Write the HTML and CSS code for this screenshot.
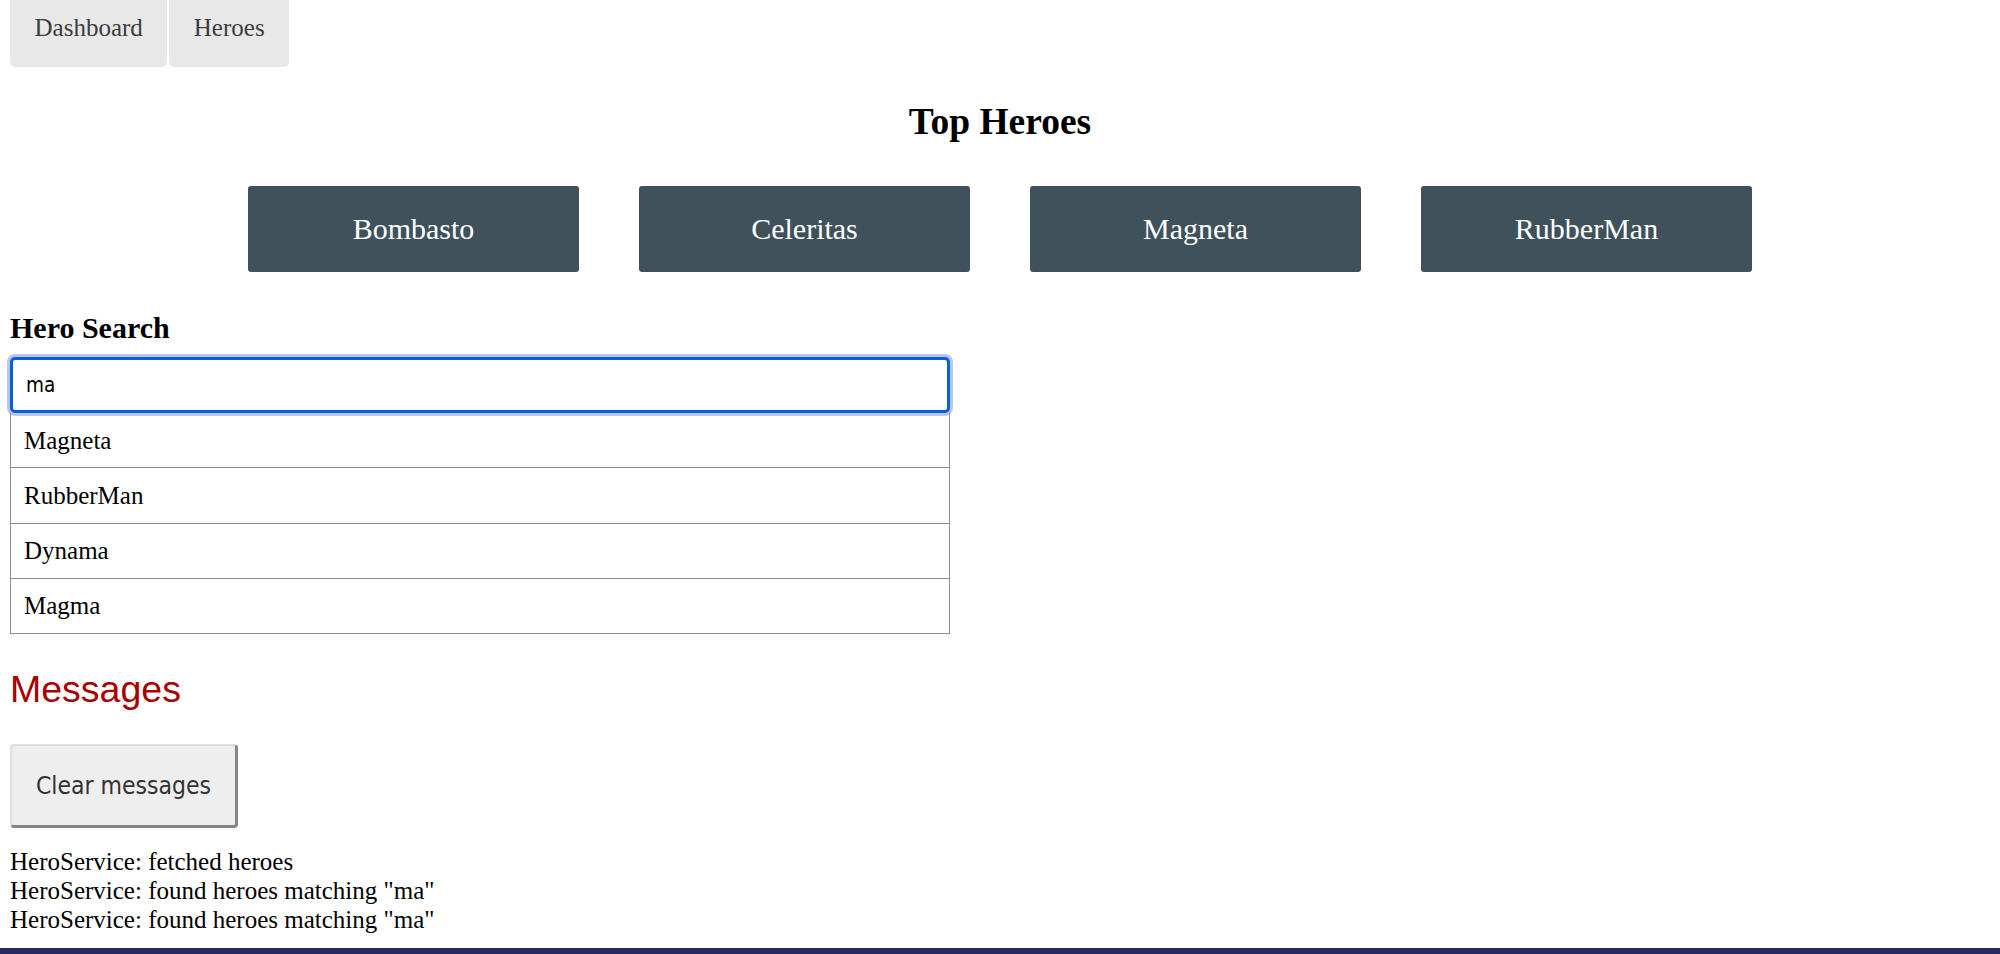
FILE: index.html
```html
<!DOCTYPE html>
<html lang="en">
<head>
<meta charset="utf-8">
<title>Tour of Heroes</title>
<link rel="stylesheet" href="styles.css">
</head>
<body>
<div class="page">
  <nav class="nav">
    <a class="nav-link" href="#">Dashboard</a>
    <a class="nav-link" href="#">Heroes</a>
  </nav>

  <h2 class="dash-title">Top Heroes</h2>
  <div class="heroes-menu">
    <a class="hero-card" href="#">Bombasto</a>
    <a class="hero-card" href="#">Celeritas</a>
    <a class="hero-card" href="#">Magneta</a>
    <a class="hero-card" href="#">RubberMan</a>
  </div>

  <div class="search">
    <label class="search-label" for="search-box">Hero Search</label>
    <input class="search-box" id="search-box" type="text" value="ma">
    <ul class="search-result">
      <li><a class="result-link" href="#">Magneta</a></li>
      <li><a class="result-link" href="#">RubberMan</a></li>
      <li><a class="result-link" href="#">Dynama</a></li>
      <li><a class="result-link" href="#">Magma</a></li>
    </ul>
  </div>

  <div class="messages">
    <h2 class="messages-title">Messages</h2>
    <button class="clear" type="button">Clear messages</button>
    <div class="message">HeroService: fetched heroes</div>
    <div class="message">HeroService: found heroes matching "ma"</div>
    <div class="message">HeroService: found heroes matching "ma"</div>
  </div>
</div>
<div class="bottom-bar"></div>
</body>
</html>
```

FILE: styles.css
```css
html, body {
  margin: 0;
  padding: 0;
}

body {
  min-height: 100vh;
  display: flex;
  flex-direction: column;
  font-family: "Liberation Serif", "Times New Roman", serif;
  font-size: 25px;
  color: #000;
  background: #fff;
}

.page {
  padding: 0 10px;
}

/* Navigation */
.nav {
  display: flex;
  gap: 2px;
  margin-top: -11.5px;
}

.nav-link {
  display: block;
  padding: 25px 24.5px;
  line-height: 28.75px;
  background-color: #e8e8e8;
  color: #3d3d3d;
  text-decoration: none;
  border-radius: 5px;
}

/* Dashboard */
.dash-title {
  margin: 32.25px 0 0;
  font-size: 37.5px;
  line-height: 43px;
  font-weight: bold;
  text-align: center;
}

.heroes-menu {
  margin-top: 43.5px;
  display: flex;
  justify-content: center;
  gap: 60px;
}

.hero-card {
  width: 331px;
  box-sizing: border-box;
  padding: 25.75px 0;
  line-height: 34.5px;
  font-size: 30px;
  background-color: #3f525c;
  color: #fff;
  text-align: center;
  text-decoration: none;
  border-radius: 3px;
}

/* Search */
.search {
  width: 940px;
}

.search-label {
  display: block;
  margin-top: 39px;
  font-size: 30px;
  line-height: 34.5px;
  font-weight: bold;
}

.search-box {
  display: block;
  box-sizing: border-box;
  width: 100%;
  height: 56px;
  margin: 11.5px 0 0;
  padding: 0 13px;
  border: 3px solid #0a5fd8;
  border-radius: 5px;
  box-shadow: 0 0 0 3px #b4c8ec;
  outline: none;
  font-family: "DejaVu Sans Condensed", "DejaVu Sans", sans-serif;
  font-stretch: condensed;
  font-size: 20.5px;
  color: #000;
  background: #fff;
}

.search-result {
  list-style: none;
  margin: 0;
  padding: 0;
}

.result-link {
  display: block;
  box-sizing: border-box;
  height: 55.25px;
  padding: 12.5px 13px;
  line-height: 29.25px;
  border-left: 1px solid #8c8c8c;
  border-right: 1px solid #8c8c8c;
  border-bottom: 1px solid #8c8c8c;
  color: #000;
  text-decoration: none;
}

/* Messages */
.messages-title {
  margin: 33.5px 0 0;
  font-family: "Liberation Sans", Arial, sans-serif;
  font-weight: normal;
  font-size: 37.5px;
  line-height: 43px;
  color: #a80000;
}

.clear {
  display: block;
  box-sizing: border-box;
  width: 228px;
  height: 84px;
  margin-top: 33.5px;
  padding: 0;
  font-family: "DejaVu Sans Condensed", "DejaVu Sans", sans-serif;
  font-stretch: condensed;
  font-size: 24.5px;
  color: #333;
  background-color: #eee;
  border-style: solid;
  border-width: 2px 3px 3px 2px;
  border-color: #dedede #858585 #858585 #dedede;
  border-radius: 4px;
}

.message {
  line-height: 28.75px;
}

.message:first-of-type {
  margin-top: 20px;
}

.bottom-bar {
  margin-top: auto;
  height: 6px;
  background-color: #262860;
}
```
